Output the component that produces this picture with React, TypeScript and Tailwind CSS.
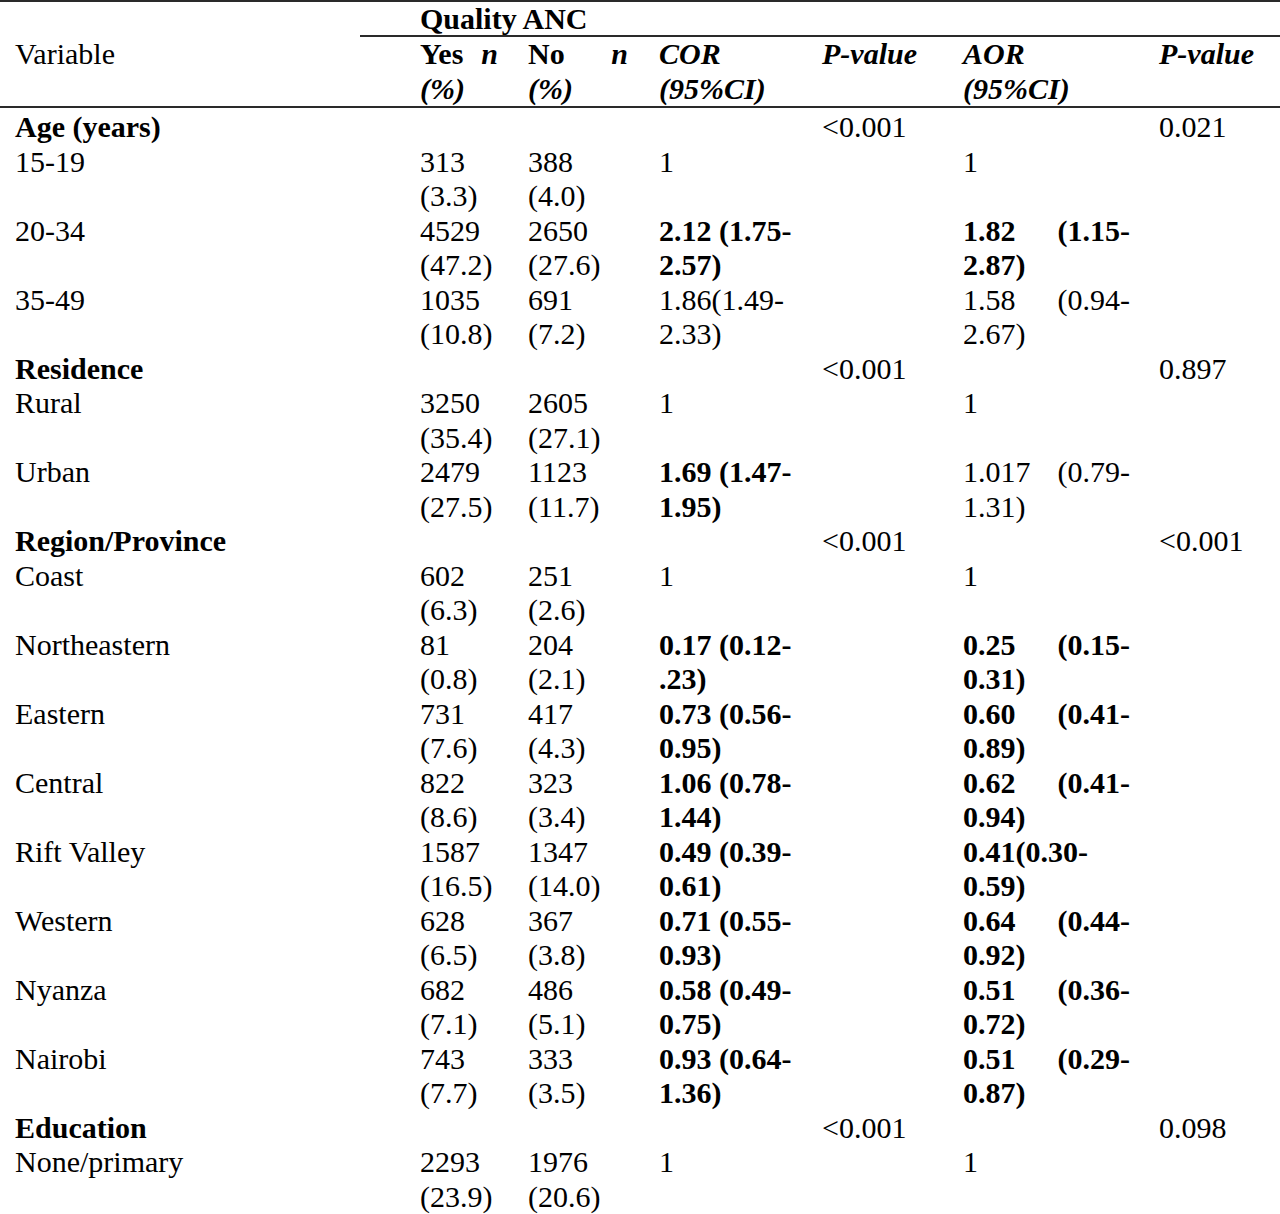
import React from "react";

type Row = {
  label: string;
  group?: boolean;
  p1?: string;
  p2?: string;
  yes?: [string, string];
  no?: [string, string];
  cor?: string[];
  corBold?: boolean;
  aor?: string[];
  aorBold?: boolean;
  aorJustify?: boolean;
};

const ROWS: Row[] = [
  { label: "Age (years)", group: true, p1: "<0.001", p2: "0.021" },
  { label: "15-19", yes: ["313", "(3.3)"], no: ["388", "(4.0)"], cor: ["1"], aor: ["1"] },
  { label: "20-34", yes: ["4529", "(47.2)"], no: ["2650", "(27.6)"], cor: ["2.12 (1.75-", "2.57)"], corBold: true, aor: ["1.82 (1.15-", "2.87)"], aorBold: true, aorJustify: true },
  { label: "35-49", yes: ["1035", "(10.8)"], no: ["691", "(7.2)"], cor: ["1.86(1.49-", "2.33)"], aor: ["1.58 (0.94-", "2.67)"], aorJustify: true },
  { label: "Residence", group: true, p1: "<0.001", p2: "0.897" },
  { label: "Rural", yes: ["3250", "(35.4)"], no: ["2605", "(27.1)"], cor: ["1"], aor: ["1"] },
  { label: "Urban", yes: ["2479", "(27.5)"], no: ["1123", "(11.7)"], cor: ["1.69 (1.47-", "1.95)"], corBold: true, aor: ["1.017 (0.79-", "1.31)"], aorJustify: true },
  { label: "Region/Province", group: true, p1: "<0.001", p2: "<0.001" },
  { label: "Coast", yes: ["602", "(6.3)"], no: ["251", "(2.6)"], cor: ["1"], aor: ["1"] },
  { label: "Northeastern", yes: ["81", "(0.8)"], no: ["204", "(2.1)"], cor: ["0.17 (0.12-", ".23)"], corBold: true, aor: ["0.25 (0.15-", "0.31)"], aorBold: true, aorJustify: true },
  { label: "Eastern", yes: ["731", "(7.6)"], no: ["417", "(4.3)"], cor: ["0.73 (0.56-", "0.95)"], corBold: true, aor: ["0.60 (0.41-", "0.89)"], aorBold: true, aorJustify: true },
  { label: "Central", yes: ["822", "(8.6)"], no: ["323", "(3.4)"], cor: ["1.06 (0.78-", "1.44)"], corBold: true, aor: ["0.62 (0.41-", "0.94)"], aorBold: true, aorJustify: true },
  { label: "Rift Valley", yes: ["1587", "(16.5)"], no: ["1347", "(14.0)"], cor: ["0.49 (0.39-", "0.61)"], corBold: true, aor: ["0.41(0.30-", "0.59)"], aorBold: true },
  { label: "Western", yes: ["628", "(6.5)"], no: ["367", "(3.8)"], cor: ["0.71 (0.55-", "0.93)"], corBold: true, aor: ["0.64 (0.44-", "0.92)"], aorBold: true, aorJustify: true },
  { label: "Nyanza", yes: ["682", "(7.1)"], no: ["486", "(5.1)"], cor: ["0.58 (0.49-", "0.75)"], corBold: true, aor: ["0.51 (0.36-", "0.72)"], aorBold: true, aorJustify: true },
  { label: "Nairobi", yes: ["743", "(7.7)"], no: ["333", "(3.5)"], cor: ["0.93 (0.64-", "1.36)"], corBold: true, aor: ["0.51 (0.29-", "0.87)"], aorBold: true, aorJustify: true },
  { label: "Education", group: true, p1: "<0.001", p2: "0.098" },
  { label: "None/primary", yes: ["2293", "(23.9)"], no: ["1976", "(20.6)"], cor: ["1"], aor: ["1"] },
];

const GRID = "grid grid-cols-[420px_108px_131px_163px_141px_196px_1fr]";

// splits "1.82 (1.15-" into two words pushed to the cell edges, like Word's justify
function Justified({ text, width }: { text: string; width: string }) {
  const [a, b] = text.split(" ");
  return (
    <div className={`flex justify-between ${width}`}>
      <span>{a}</span>
      <span>{b}</span>
    </div>
  );
}

function Lines({ lines, bold, justify }: { lines?: string[]; bold?: boolean; justify?: boolean }) {
  if (!lines) return <div />;
  return (
    <div className={bold ? "font-bold" : ""}>
      {lines.map((l, i) =>
        justify && i === 0 && l.includes(" ") ? (
          <Justified key={i} text={l} width="w-[167px]" />
        ) : (
          <div key={i} className="whitespace-nowrap">
            {l}
          </div>
        )
      )}
    </div>
  );
}

export default function App() {
  return (
    <div
      className="bg-white text-black text-[30px] leading-[34.5px] h-[1214px] overflow-hidden"
      style={{ fontFamily: '"Liberation Serif", "Times New Roman", serif' }}
    >
      {/* top rule */}
      <div className="h-[2px] bg-[#2a2a2a]" />

      {/* spanning header */}
      <div className={`${GRID} h-[33px]`}>
        <div />
        <div className="col-span-6 font-bold leading-[33px]">Quality ANC</div>
      </div>
      <div className="ml-[360px] h-[2px] bg-[#2a2a2a]" />

      {/* column header */}
      <div className={GRID}>
        <div className="pl-[15px]">Variable</div>
        <div className="font-bold">
          <div className="flex justify-between w-[78px]">
            <span>Yes</span>
            <span className="italic">n</span>
          </div>
          <div className="italic">(%)</div>
        </div>
        <div className="font-bold">
          <div className="flex justify-between w-[100px]">
            <span>No</span>
            <span className="italic">n</span>
          </div>
          <div className="italic">(%)</div>
        </div>
        <div className="font-bold italic">
          <div>COR</div>
          <div>(95%CI)</div>
        </div>
        <div className="font-bold italic">P-value</div>
        <div className="font-bold italic">
          <div>AOR</div>
          <div>(95%CI)</div>
        </div>
        <div className="font-bold italic">P-value</div>
      </div>
      <div className="h-[2px] bg-[#2a2a2a]" />

      {/* body */}
      <div className="pt-[2px]">
        {ROWS.map((r) =>
          r.group ? (
            <div key={r.label} className={GRID}>
              <div className="pl-[15px] font-bold whitespace-nowrap">{r.label}</div>
              <div />
              <div />
              <div />
              <div>{r.p1}</div>
              <div />
              <div>{r.p2}</div>
            </div>
          ) : (
            <div key={r.label} className={`${GRID} h-[69px]`}>
              <div className="pl-[15px] whitespace-nowrap">{r.label}</div>
              <Lines lines={r.yes} />
              <Lines lines={r.no} />
              <Lines lines={r.cor} bold={r.corBold} />
              <div />
              <Lines lines={r.aor} bold={r.aorBold} justify={r.aorJustify} />
              <div />
            </div>
          )
        )}
      </div>
    </div>
  );
}
